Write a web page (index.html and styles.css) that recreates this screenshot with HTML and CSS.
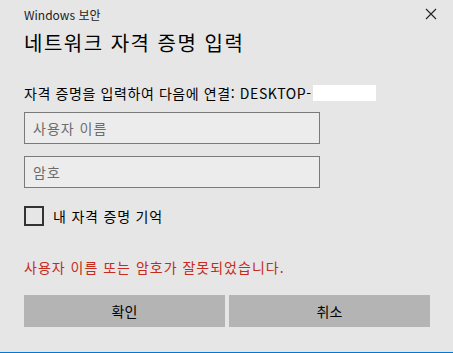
FILE: index.html
```html
<!DOCTYPE html>
<html lang="ko">
<head>
  <meta charset="UTF-8">
  <meta name="viewport" content="width=device-width, initial-scale=1.0">
  <title>Windows 보안</title>
  <link rel="stylesheet" href="styles.css">
</head>
<body>
  <div class="dialog">
    <div class="titlebar">
      <span class="app-name">Windows 보안</span>
      <svg class="close" width="12" height="12" viewBox="0 0 12 12">
        <path d="M1 1 L11 11 M11 1 L1 11" stroke="#222" stroke-width="1.1" fill="none"/>
      </svg>
    </div>
    <h1>네트워크 자격 증명 입력</h1>

    <p class="desc">자격 증명을 입력하여 다음에 연결: DESKTOP-<span class="masked"></span></p>

    <div class="field">사용자 이름</div>
    <div class="field">암호</div>

    <label class="remember">
      <span class="checkbox"></span>
      <span>내 자격 증명 기억</span>
    </label>

    <p class="error">사용자 이름 또는 암호가 잘못되었습니다.</p>

    <div class="buttons">
      <div class="btn">확인</div>
      <div class="btn">취소</div>
    </div>
  </div>
</body>
</html>
```

FILE: styles.css
```css
html, body {
  margin: 0;
  padding: 0;
}
body {
  width: 453px;
  height: 353px;
  background: #e6e6e6;
  font-family: "Noto Sans CJK KR", "Noto Sans", "Liberation Sans", sans-serif;
  color: #000;
  overflow: hidden;
}
.dialog {
  box-sizing: border-box;
  height: 353px;
  padding: 0 23px 0 24px;
  border-bottom: 1px solid #0078d7;
}
.titlebar {
  display: flex;
  justify-content: space-between;
  align-items: center;
  height: 28px;
}
.app-name {
  font-size: 12px;
  color: #222;
}
.close {
  margin-right: -7px;
}
h1 {
  margin: 0;
  font-size: 20px;
  font-weight: normal;
  letter-spacing: 1.5px;
  line-height: 30px;
  height: 46px;
}
.desc {
  margin: 0;
  font-size: 14px;
  letter-spacing: 0.6px;
  line-height: 20px;
  height: 38px;
  display: flex;
  align-items: center;
}
.masked {
  display: inline-block;
  width: 63px;
  height: 16px;
  margin-left: 1px;
  background: #fff;
}
.field {
  box-sizing: border-box;
  width: 296px;
  height: 32px;
  border: 1px solid #7a7a7a;
  background: #ececec;
  color: #6d6d6d;
  font-size: 14px;
  letter-spacing: 1px;
  line-height: 30px;
  padding-left: 8px;
  margin-bottom: 12px;
}
.remember {
  display: flex;
  align-items: center;
  gap: 9px;
  font-size: 14px;
  letter-spacing: 0.8px;
  height: 20px;
  margin-top: 18px;
}
.checkbox {
  box-sizing: border-box;
  width: 20px;
  height: 20px;
  border: 2px solid #333;
}
.error {
  margin: 31px 0 0;
  font-size: 14px;
  letter-spacing: 1px;
  line-height: 20px;
  color: #c42b1c;
}
.buttons {
  display: flex;
  gap: 4px;
  margin-top: 18px;
}
.btn {
  flex: 1;
  height: 32px;
  line-height: 32px;
  text-align: center;
  background: #b4b4b4;
  font-size: 14px;
}
```
